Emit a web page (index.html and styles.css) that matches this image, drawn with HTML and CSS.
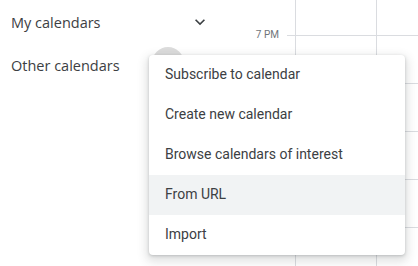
FILE: index.html
```html
<!DOCTYPE html>
<html lang="en">
<head>
  <meta charset="UTF-8" />
  <title>Calendars</title>
  <link rel="stylesheet" href="styles.css">
</head>
<body>
  <div class="layout">
    <!-- Sidebar -->
    <div class="sidebar">
      <div class="section-row first">
        <span class="section-title">My calendars</span>
        <button class="icon-btn">
          <svg width="20" height="20" viewBox="0 0 24 24"><path d="M7.41 8.59 12 13.17l4.59-4.58L18 10l-6 6-6-6z" fill="#3c4043"/></svg>
        </button>
      </div>
      <div class="section-row">
        <span class="section-title">Other calendars</span>
        <button class="icon-btn hovered"></button>
        <button class="icon-btn"></button>
      </div>
    </div>

    <!-- Time gutter -->
    <div class="gutter">
      <div class="time-label">7 PM</div>
    </div>

    <!-- Day grid -->
    <div class="grid"></div>
  </div>

  <!-- Add calendar menu -->
  <ul class="menu">
    <li>Subscribe to calendar</li>
    <li>Create new calendar</li>
    <li>Browse calendars of interest</li>
    <li class="active">From URL</li>
    <li>Import</li>
  </ul>
</body>
</html>
```

FILE: styles.css
```css
body {
  margin: 0;
  background: #fff;
  font-family: Roboto, Arial, sans-serif;
  color: #3c4043;
}

.layout {
  display: flex;
  height: 266px;
  overflow: hidden;
}

.sidebar {
  width: 232px;
  padding-left: 11px;
  box-sizing: border-box;
}

.section-row {
  display: flex;
  align-items: center;
  width: 205px;
  height: 42px;
}

.section-row.first {
  height: 44px;
}

.section-title {
  flex: 1;
  font-family: "Open Sans", Arial, sans-serif;
  font-size: 14.5px;
  color: #3c4043;
}

.icon-btn {
  width: 32px;
  height: 32px;
  border: none;
  border-radius: 50%;
  background: transparent;
  padding: 0;
  display: flex;
  align-items: center;
  justify-content: center;
}

.icon-btn.hovered {
  background: #dcdcdc;
  margin-top: -4px;
}

.gutter {
  width: 55px;
}

.time-label {
  margin-top: 29px;
  padding-right: 8px;
  text-align: right;
  font-size: 10px;
  color: #70757a;
}

.grid {
  flex: 1;
  background-image:
    linear-gradient(#dadce0 0 1px, transparent 1px),
    linear-gradient(to right, #dadce0 0 1px, transparent 1px);
  background-size: 100% 48px, 81px 100%;
  background-position: 0 35px, 8px 0;
}

.menu {
  position: absolute;
  left: 149px;
  top: 55px;
  width: 256px;
  margin: 0;
  padding: 0;
  list-style: none;
  background: #fff;
  border-radius: 4px;
  box-shadow: 0 4px 10px 3px rgba(60, 64, 67, 0.15), 0 1px 3px rgba(60, 64, 67, 0.25);
}

.menu li {
  height: 40px;
  line-height: 38px;
  padding-left: 16px;
  font-size: 14px;
  color: #3c4043;
}

.menu li.active {
  background: #f1f3f4;
}
```
